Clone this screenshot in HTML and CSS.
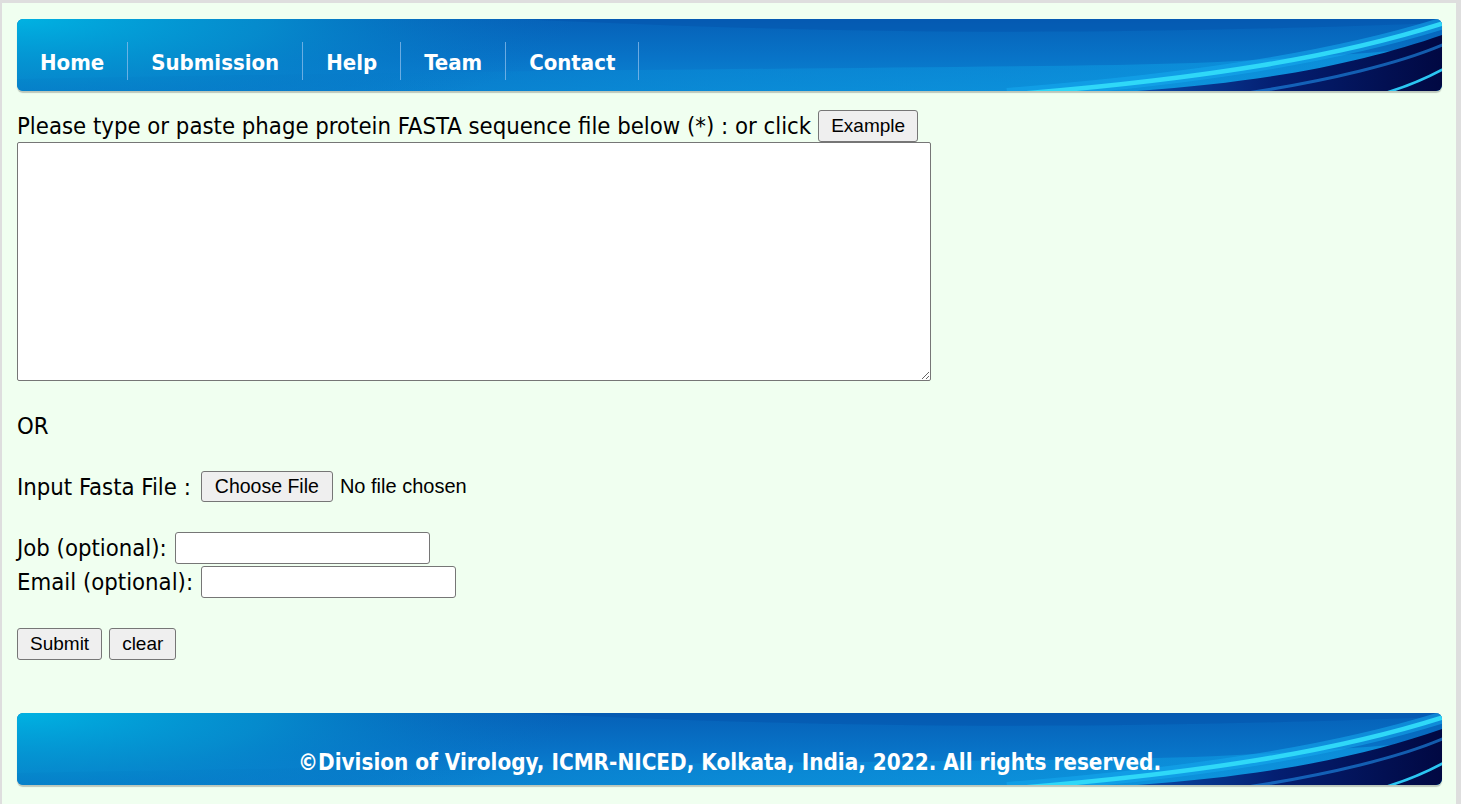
FILE: index.html
```html
<!DOCTYPE html>
<html lang="en">
<head>
<meta charset="utf-8">
<title>Phage protein submission</title>
<link rel="stylesheet" href="styles.css">
</head>
<body>
<div class="page">
  <header class="banner header">
    <svg class="swoosh" viewBox="0 0 1425 72" preserveAspectRatio="none" aria-hidden="true">
      <defs>
        <linearGradient id="hbase" x1="0" y1="0" x2="0" y2="1">
          <stop offset="0" stop-color="#0661b8"/>
          <stop offset="0.55" stop-color="#0874c8"/>
          <stop offset="1" stop-color="#0b86d3"/>
        </linearGradient>
        <radialGradient id="hleft" cx="0" cy="0" r="1" gradientUnits="userSpaceOnUse" gradientTransform="translate(0 0) scale(560 120)">
          <stop offset="0" stop-color="#00b2e2"/>
          <stop offset="0.45" stop-color="#0590cf" stop-opacity="0.85"/>
          <stop offset="1" stop-color="#0670c2" stop-opacity="0"/>
        </radialGradient>
        <linearGradient id="hnavy" x1="0" y1="0" x2="1" y2="0">
          <stop offset="0" stop-color="#0a4aa8"/>
          <stop offset="0.45" stop-color="#041f72"/>
          <stop offset="1" stop-color="#010842"/>
        </linearGradient>
        <linearGradient id="hbottom" x1="0" y1="0" x2="1" y2="0">
          <stop offset="0" stop-color="#0566bb"/>
          <stop offset="0.5" stop-color="#0a8ed8"/>
          <stop offset="1" stop-color="#10a6ea"/>
        </linearGradient>
      </defs>
      <rect width="1425" height="72" fill="url(#hbase)"/>
      <path d="M0,72 L0,60 C400,52 800,50 1100,46 C1200,44 1280,40 1425,28 L1425,72 Z" fill="url(#hbottom)" opacity="0.55"/>
      <path d="M500,0 C800,14 1050,18 1425,4 L1425,0 Z" fill="#0552aa" opacity="0.45"/>
      <rect width="1425" height="72" fill="url(#hleft)"/>
      <path d="M1120,72 C1260,62 1350,42 1425,16 L1425,72 Z" fill="url(#hnavy)"/>
      <path d="M990,75 C1180,60 1320,38 1430,3" fill="none" stroke="#15a9ee" stroke-width="12" opacity="0.55"/>
      <path d="M1000,75 C1185,60 1322,38 1430,3" fill="none" stroke="#2fd8f8" stroke-width="4.5"/>
      <path d="M1230,74 C1310,62 1385,44 1430,24" fill="none" stroke="#1b7fd8" stroke-width="3" opacity="0.7"/>
      <path d="M1368,74 C1395,66 1412,58 1430,48" fill="none" stroke="#2bc6f2" stroke-width="2.5"/>
    </svg>
    <nav class="nav">
      <a class="nav-item" href="#">Home</a>
      <a class="nav-item" href="#">Submission</a>
      <a class="nav-item" href="#">Help</a>
      <a class="nav-item" href="#">Team</a>
      <a class="nav-item" href="#">Contact</a>
    </nav>
  </header>

  <form class="form">
    <div class="row row-prompt">
      <span class="label">Please type or paste phage protein FASTA sequence file below (*) : or click</span>
      <button type="button" class="btn">Example</button>
    </div>
    <textarea class="seq"></textarea>

    <div class="row row-or"><span class="label">OR</span></div>

    <div class="row row-file">
      <span class="label">Input Fasta File :</span>
      <input class="file" type="file">
    </div>

    <div class="row row-job">
      <span class="label">Job (optional):</span>
      <input class="text" type="text">
    </div>
    <div class="row row-email">
      <span class="label">Email (optional):</span>
      <input class="text" type="text">
    </div>

    <div class="row row-actions">
      <button type="submit" class="btn">Submit</button>
      <button type="reset" class="btn">clear</button>
    </div>
  </form>

  <footer class="banner footer">
    <svg class="swoosh" viewBox="0 0 1425 72" preserveAspectRatio="none" aria-hidden="true">
      <defs>
        <linearGradient id="fbase" x1="0" y1="0" x2="0" y2="1">
          <stop offset="0" stop-color="#0661b8"/>
          <stop offset="0.55" stop-color="#0874c8"/>
          <stop offset="1" stop-color="#0b86d3"/>
        </linearGradient>
        <radialGradient id="fleft" cx="0" cy="0" r="1" gradientUnits="userSpaceOnUse" gradientTransform="translate(0 0) scale(560 120)">
          <stop offset="0" stop-color="#00b2e2"/>
          <stop offset="0.45" stop-color="#0590cf" stop-opacity="0.85"/>
          <stop offset="1" stop-color="#0670c2" stop-opacity="0"/>
        </radialGradient>
        <linearGradient id="fnavy" x1="0" y1="0" x2="1" y2="0">
          <stop offset="0" stop-color="#0a4aa8"/>
          <stop offset="0.45" stop-color="#041f72"/>
          <stop offset="1" stop-color="#010842"/>
        </linearGradient>
        <linearGradient id="fbottom" x1="0" y1="0" x2="1" y2="0">
          <stop offset="0" stop-color="#0566bb"/>
          <stop offset="0.5" stop-color="#0a8ed8"/>
          <stop offset="1" stop-color="#10a6ea"/>
        </linearGradient>
      </defs>
      <rect width="1425" height="72" fill="url(#fbase)"/>
      <path d="M0,72 L0,60 C400,52 800,50 1100,46 C1200,44 1280,40 1425,28 L1425,72 Z" fill="url(#fbottom)" opacity="0.55"/>
      <path d="M500,0 C800,14 1050,18 1425,4 L1425,0 Z" fill="#0552aa" opacity="0.45"/>
      <rect width="1425" height="72" fill="url(#fleft)"/>
      <path d="M1120,72 C1260,62 1350,42 1425,16 L1425,72 Z" fill="url(#fnavy)"/>
      <path d="M990,75 C1180,60 1320,38 1430,3" fill="none" stroke="#15a9ee" stroke-width="12" opacity="0.55"/>
      <path d="M1000,75 C1185,60 1322,38 1430,3" fill="none" stroke="#2fd8f8" stroke-width="4.5"/>
      <path d="M1230,74 C1310,62 1385,44 1430,24" fill="none" stroke="#1b7fd8" stroke-width="3" opacity="0.7"/>
      <path d="M1368,74 C1395,66 1412,58 1430,48" fill="none" stroke="#2bc6f2" stroke-width="2.5"/>
    </svg>
    <p class="copy">©Division of Virology, ICMR-NICED, Kolkata, India, 2022. All rights reserved.</p>
  </footer>
</div>
</body>
</html>
```

FILE: styles.css
```css
html {
  background: #dedede;
  height: 100%;
}
body {
  margin: 3px 5px 0 2px;
  min-height: calc(100% - 3px);
  background: #f0fff0;
  font-family: "DejaVu Sans Condensed", "DejaVu Sans", sans-serif;
  color: #000;
}
.page {
  padding: 16px 14px 18px 15px;
}

/* banners */
.banner {
  position: relative;
  height: 72px;
  border-radius: 6px;
  overflow: hidden;
  box-shadow: 0 2px 1px rgba(0, 0, 0, 0.22);
}
.swoosh {
  position: absolute;
  inset: 0;
  width: 100%;
  height: 100%;
  display: block;
}
.nav {
  position: relative;
  display: flex;
  padding-top: 23px;
}
.nav-item {
  display: block;
  height: 38px;
  line-height: 41px;
  padding: 0 23px;
  border-right: 1px solid rgba(140, 190, 235, 0.75);
  color: #fff;
  text-decoration: none;
  font-weight: bold;
  font-size: 22px;
}

/* form */
.form {
  font-size: 23.7px;
}
.row {
  display: flex;
  align-items: center;
  gap: 8px;
}
.label {
  white-space: nowrap;
}
.row-prompt {
  margin-top: 19px;
  height: 32px;
  gap: 7px;
}
.btn {
  font-family: "Liberation Sans", Arial, sans-serif;
  font-size: 19px;
  color: #000;
  background: #efefef;
  border: 1px solid #767676;
  border-radius: 3px;
  height: 32px;
  padding: 0 12px;
  margin: 0;
}
.seq {
  display: block;
  box-sizing: border-box;
  width: 914px;
  height: 239px;
  margin: 0;
  border: 1px solid #767676;
  border-radius: 2px;
  background: #fff;
}
.row-or {
  margin-top: 31px;
  height: 28px;
}
.row-file {
  margin-top: 31px;
  height: 31px;
  gap: 10px;
}
.file {
  font-family: "Liberation Sans", Arial, sans-serif;
  font-size: 20px;
  color: #000;
}
.file::file-selector-button {
  font-family: "Liberation Sans", Arial, sans-serif;
  font-size: 19.5px;
  background: #efefef;
  border: 1px solid #767676;
  border-radius: 3px;
  height: 31px;
  padding: 0 13px;
  margin-right: 7px;
  color: #000;
}
.row-job {
  margin-top: 30px;
  height: 32px;
}
.row-email {
  margin-top: 2px;
  height: 32px;
}
.text {
  box-sizing: border-box;
  width: 255px;
  height: 32px;
  margin: 0;
  border: 1px solid #767676;
  border-radius: 3px;
  background: #fff;
}
.row-actions {
  margin-top: 30px;
  height: 32px;
  gap: 7px;
}

/* footer */
.footer {
  margin-top: 53px;
}
.copy {
  position: relative;
  margin: 0;
  padding-top: 36px;
  text-align: center;
  color: #fff;
  font-weight: bold;
  font-size: 22.3px;
  line-height: 26px;
}
```
